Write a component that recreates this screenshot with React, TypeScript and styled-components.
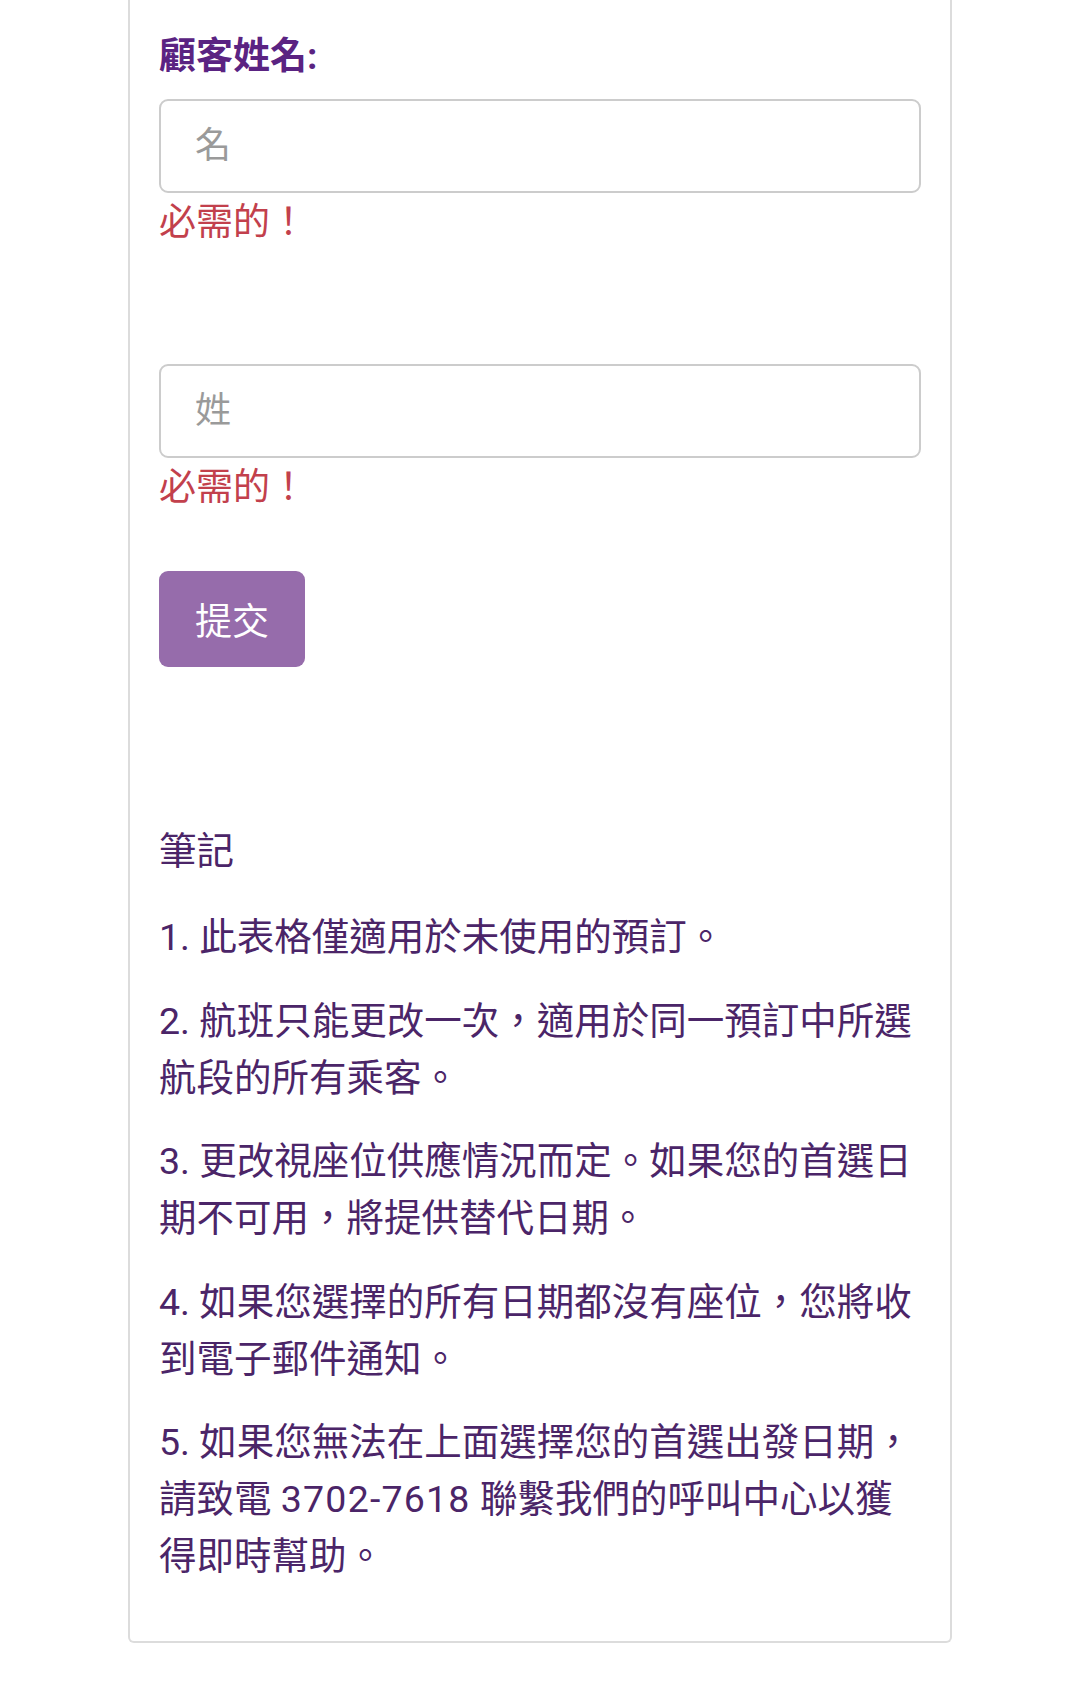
import { type FC } from "react";
import styled, { createGlobalStyle } from "styled-components";

const GlobalStyle = createGlobalStyle`
  html, body {
    margin: 0;
    padding: 0;
    background: #fff;
  }
  body {
    font-family: Roboto, "Noto Sans CJK TC", "Noto Sans", sans-serif;
  }
`;

const Page = styled.div`
  display: flex;
  justify-content: center;
  padding-bottom: 56px;
`;

const Card = styled.div`
  width: 824px;
  box-sizing: border-box;
  border: 2px solid #dcdcdc;
  border-top: none;
  border-radius: 0 0 6px 6px;
  padding: 29px 29px 29px 29px;
  display: flex;
  flex-direction: column;
`;

const Label = styled.div`
  font-size: 37px;
  line-height: 56px;
  font-weight: 700;
  color: #5a2382;
  margin-bottom: 14px;
`;

const TextInput = styled.input<{ $gap?: number }>`
  display: block;
  box-sizing: border-box;
  width: 100%;
  height: 94px;
  margin-top: ${(p) => p.$gap ?? 0}px;
  padding: 0 34px;
  border: 2px solid #cccccc;
  border-radius: 9px;
  font-family: inherit;
  font-size: 36px;
  color: #333;
  background: #fff;
  outline: none;

  &::placeholder {
    color: #9a9a9a;
  }
`;

const ErrorText = styled.div`
  font-size: 37px;
  line-height: 57px;
  color: #c2404c;
  margin-top: 1px;
`;

const SubmitButton = styled.button`
  align-self: flex-start;
  margin-top: 55px;
  width: 146px;
  height: 96px;
  border: none;
  border-radius: 9px;
  background: #966cab;
  color: #fff;
  font-family: inherit;
  font-size: 37px;
  cursor: pointer;
`;

const Notes = styled.div`
  margin-top: 156px;
  padding-right: 6px;
  color: #4b2568;
  font-size: 37.5px;
  line-height: 57px;
`;

const NotesTitle = styled.div`
  margin-bottom: 29px;
`;

const Note = styled.p`
  margin: 0 0 26.5px 0;
`;

const Phone = styled.span`
  letter-spacing: 1.2px;
`;

const App: FC = () => {
  return (
    <>
      <GlobalStyle />
      <Page>
        <Card>
          <Label>顧客姓名:</Label>
          <TextInput placeholder="名" />
          <ErrorText>必需的！</ErrorText>
          <TextInput placeholder="姓" $gap={113} />
          <ErrorText>必需的！</ErrorText>
          <SubmitButton type="button">提交</SubmitButton>

          <Notes>
            <NotesTitle>筆記</NotesTitle>
            <Note>1. 此表格僅適用於未使用的預訂。</Note>
            <Note>2. 航班只能更改一次，適用於同一預訂中所選航段的所有乘客。</Note>
            <Note>3. 更改視座位供應情況而定。如果您的首選日期不可用，將提供替代日期。</Note>
            <Note>4. 如果您選擇的所有日期都沒有座位，您將收到電子郵件通知。</Note>
            <Note>
              5. 如果您無法在上面選擇您的首選出發日期，請致電 <Phone>3702-7618</Phone>{" "}
              聯繫我們的呼叫中心以獲得即時幫助。
            </Note>
          </Notes>
        </Card>
      </Page>
    </>
  );
};

export default App;
